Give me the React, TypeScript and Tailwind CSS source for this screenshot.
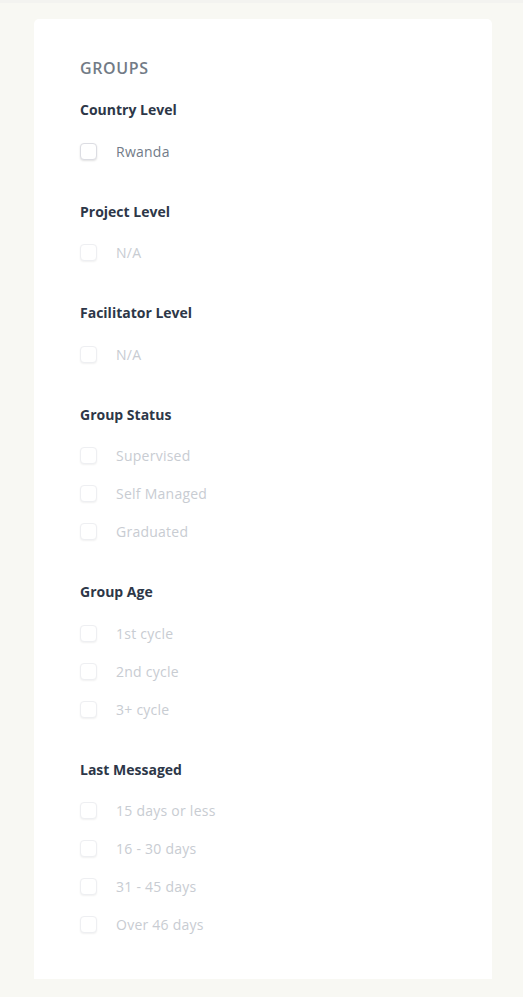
import React from "react";

type Section = { title: string; items: string[]; enabled?: boolean };

const sections: Section[] = [
  { title: "Country Level", items: ["Rwanda"], enabled: true },
  { title: "Project Level", items: ["N/A"] },
  { title: "Facilitator Level", items: ["N/A"] },
  { title: "Group Status", items: ["Supervised", "Self Managed", "Graduated"] },
  { title: "Group Age", items: ["1st cycle", "2nd cycle", "3+ cycle"] },
  { title: "Last Messaged", items: ["15 days or less", "16 - 30 days", "31 - 45 days", "Over 46 days"] },
];

export default function App() {
  return (
    <div
      className="w-[523px] h-[997px] bg-[#f8f8f3] flex flex-col"
      style={{ fontFamily: '"Open Sans", "Liberation Sans", sans-serif' }}
    >
      <div className="h-[3px] bg-[#f3f3f0]" />
      <div className="ml-[34px] mt-[16px] w-[458px] h-[960px] bg-white rounded-t-[5px] pt-[39px] px-[46px]">
        <div className="h-[20px] leading-[20px] text-[16px] font-semibold text-[#727b86] tracking-[0.6px]">
          GROUPS
        </div>
        <div className="mt-[22px] flex flex-col gap-[31.5px]">
          {sections.map((s) => (
            <div key={s.title}>
              <div className="h-[20px] leading-[20px] text-[14px] font-bold text-[#2d3748]">{s.title}</div>
              <div className="mt-[12px] flex flex-col">
                {s.items.map((it) => (
                  <div key={it} className="h-[38px] flex items-center">
                    <div
                      className={
                        "w-[17px] h-[17px] rounded-[4px] border bg-white " +
                        (s.enabled
                          ? "border-[#dcdde3] shadow-[0_1px_2px_rgba(0,0,0,0.12)]"
                          : "border-[#eeeff2] shadow-[0_1px_2px_rgba(0,0,0,0.06)]")
                      }
                    />
                    <span
                      className={
                        "ml-[19px] text-[14px] tracking-[0.25px] " +
                        (s.enabled ? "text-[#727b88]" : "text-[#c8ccd2]")
                      }
                    >
                      {it}
                    </span>
                  </div>
                ))}
              </div>
            </div>
          ))}
        </div>
      </div>
    </div>
  );
}
